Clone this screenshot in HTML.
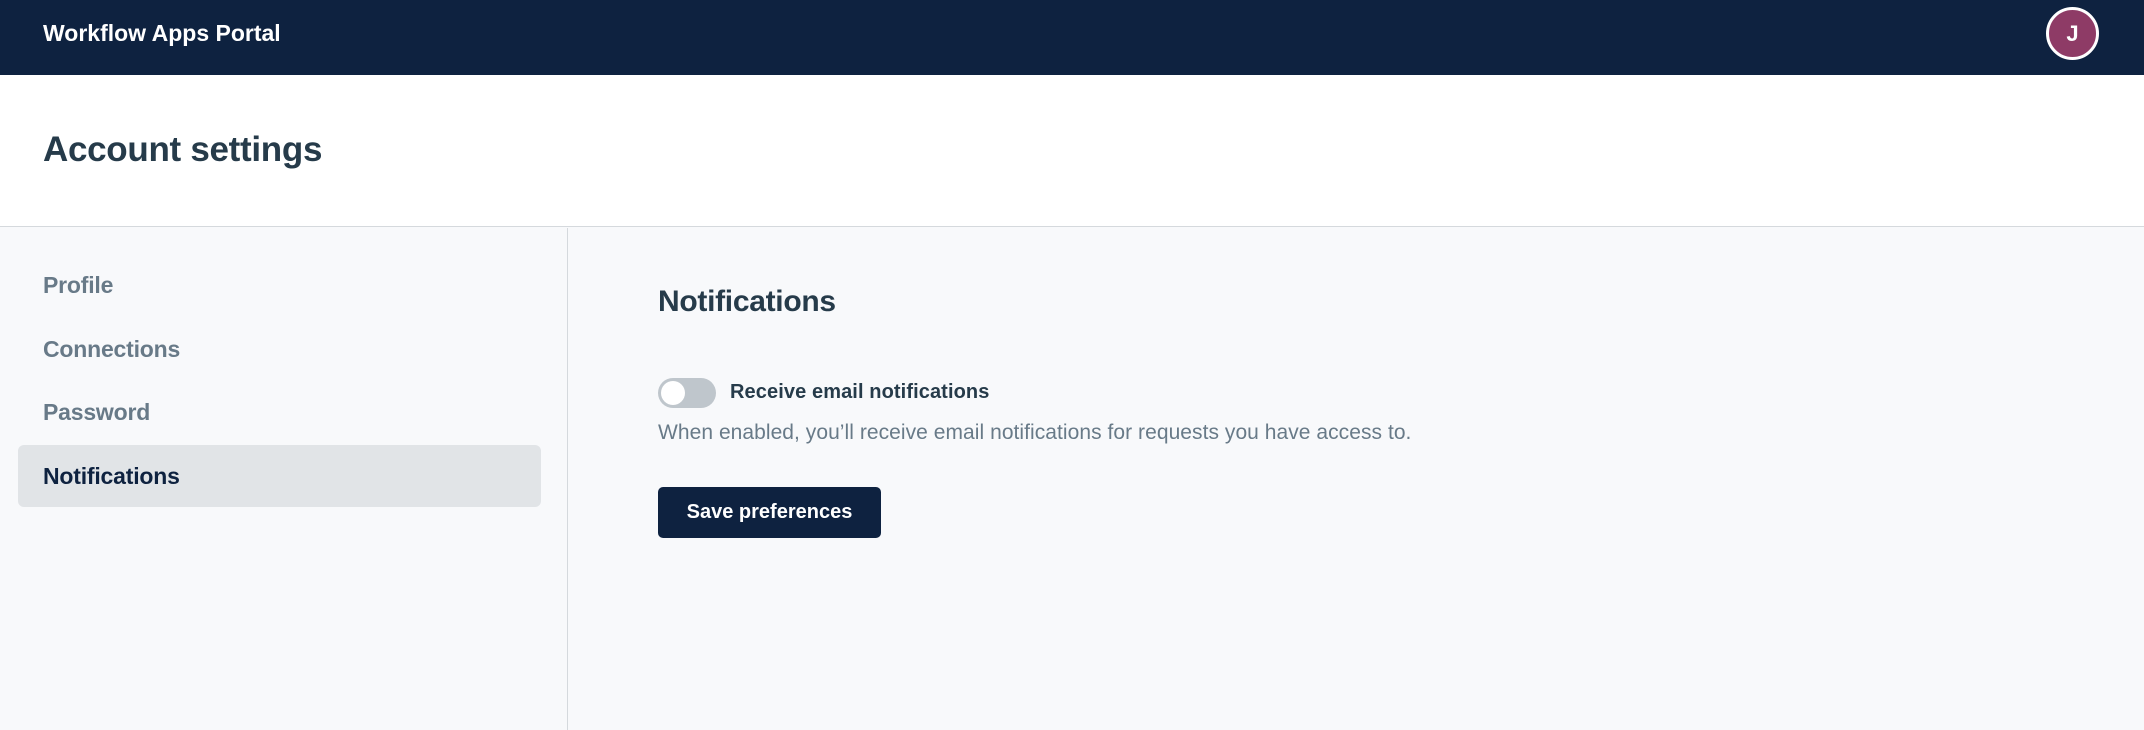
<!DOCTYPE html>
<html><head><meta charset="utf-8"><style>
*{margin:0;padding:0;box-sizing:border-box}
body{width:2144px;height:730px;overflow:hidden;font-family:"Liberation Sans",sans-serif;background:#f8f9fb;position:relative}
.hdr{position:absolute;left:0;top:0;width:2144px;height:75px;background:#0e2240}
.hdr .t{position:absolute;left:43px;top:20px;color:#fff;font-weight:bold;font-size:23px;letter-spacing:0}
.av{position:absolute;left:2046px;top:7px;width:53px;height:53px;border-radius:50%;background:#8e3b66;border:3px solid #fff;color:#fff;font-weight:bold;font-size:22px;text-align:center;line-height:47px}
.top{position:absolute;left:0;top:75px;width:2144px;height:152px;background:#fff;border-bottom:1px solid #d5d9dd}
.top h1{position:absolute;left:43px;top:55px;font-size:35px;color:#263b4a;letter-spacing:-0.3px}
.side{position:absolute;left:0;top:228px;width:568px;height:502px;border-right:1px solid #d5d9dd}
.nav{position:absolute;left:43px;font-size:23px;font-weight:bold;color:#687a88;letter-spacing:-0.2px}
.act{position:absolute;left:18px;top:445px;width:523px;height:62px;background:#e1e4e7;border-radius:6px}
h2{position:absolute;left:658px;top:285px;font-size:30px;color:#263b4a;letter-spacing:-0.3px}
.tg{position:absolute;left:658px;top:378px;width:58px;height:30px;border-radius:15px;background:#bfc6cc}
.tg:after{content:"";position:absolute;left:3px;top:3px;width:24px;height:24px;border-radius:50%;background:#fff}
.lb{position:absolute;left:730px;top:381px;font-size:20px;font-weight:bold;color:#263b4a;letter-spacing:0.1px}
.ds{position:absolute;left:658px;top:421px;font-size:21px;color:#687a88;letter-spacing:0.05px}
.btn{position:absolute;left:658px;top:487px;width:223px;height:51px;background:#0e2240;border-radius:5px;color:#fff;font-weight:bold;font-size:20px;text-align:center;line-height:51px;letter-spacing:0}
</style></head><body>
<div class="hdr"><div class="t">Workflow Apps Portal</div><div class="av">J</div></div>
<div class="top"><h1>Account settings</h1></div>
<div class="side"></div>
<div class="act"></div>
<div class="nav" style="top:272px">Profile</div>
<div class="nav" style="top:336px">Connections</div>
<div class="nav" style="top:399px">Password</div>
<div class="nav" style="top:463px;color:#0e2240">Notifications</div>
<h2>Notifications</h2>
<div class="tg"></div>
<div class="lb">Receive email notifications</div>
<div class="ds">When enabled, you’ll receive email notifications for requests you have access to.</div>
<div class="btn">Save preferences</div>
</body></html>
